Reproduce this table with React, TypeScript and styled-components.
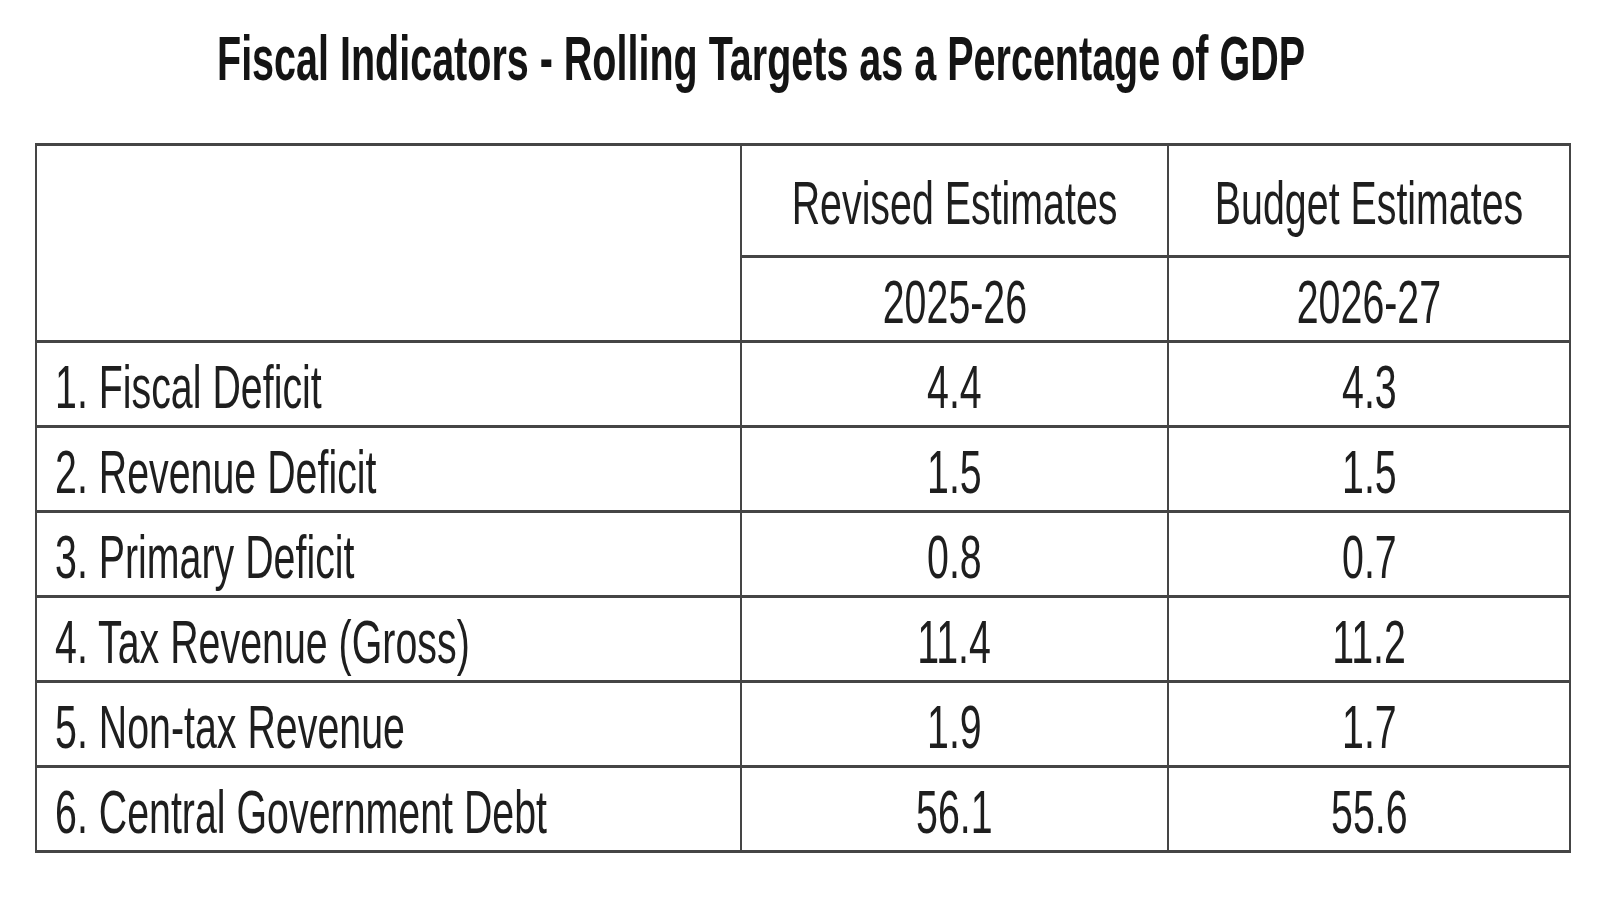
import React from 'react';
import styled, { createGlobalStyle } from 'styled-components';

const GlobalStyle = createGlobalStyle`
  html, body {
    margin: 0;
    padding: 0;
    background: #ffffff;
  }
  body {
    font-family: "Liberation Sans", Arial, sans-serif;
    color: #1c1c1c;
  }
`;

const SCPage = styled.div`
  width: 1600px;
  height: 900px;
  padding-top: 27px;
  box-sizing: border-box;
  overflow: hidden;
`;

const SCTitle = styled.h1`
  margin: 0 0 53px 0;
  padding-left: 217px;
  height: 63px;
  font-size: 63px;
  line-height: 63px;
  font-weight: 700;
  color: #141414;
  white-space: nowrap;
`;

const SCNarrow = styled.span<{ $scale: number; $origin?: string }>`
  display: inline-block;
  white-space: nowrap;
  transform: scaleX(${p => p.$scale});
  transform-origin: ${p => p.$origin || 'center'};
`;

const SCTable = styled.table`
  margin-left: 35px;
  width: 1534px;
  border-collapse: collapse;
  table-layout: fixed;
  font-size: 61px;
  line-height: 61px;
  color: #1e1e1e;
`;

const SCCell = styled.td<{ $height: number; $left?: boolean }>`
  height: ${p => p.$height}px;
  padding: 6px 0 0 ${p => (p.$left ? '18px' : '0')};
  vertical-align: middle;
  border-top: 3px solid #454545;
  border-bottom: 3px solid #454545;
  border-left: 2px solid #454545;
  border-right: 2px solid #454545;
  box-sizing: border-box;
  white-space: nowrap;
`;

const SCCellInner = styled.div<{ $left?: boolean }>`
  display: flex;
  justify-content: ${p => (p.$left ? 'flex-start' : 'center')};
  align-items: center;
`;

const rows = [
  { label: '1. Fiscal Deficit', re: '4.4', be: '4.3' },
  { label: '2. Revenue Deficit', re: '1.5', be: '1.5' },
  { label: '3. Primary Deficit', re: '0.8', be: '0.7' },
  { label: '4. Tax Revenue (Gross)', re: '11.4', be: '11.2' },
  { label: '5. Non-tax Revenue', re: '1.9', be: '1.7' },
  { label: '6. Central Government Debt', re: '56.1', be: '55.6' },
];

const SCALE = 0.645;

const Value = ({ text }: { text: string }) => (
  <SCCellInner>
    <SCNarrow $scale={SCALE}>{text}</SCNarrow>
  </SCCellInner>
);

const App = () => {
  return (
    <SCPage>
      <GlobalStyle />
      <SCTitle>
        <SCNarrow $scale={0.627} $origin="left">
          Fiscal Indicators - Rolling Targets as a Percentage of GDP
        </SCNarrow>
      </SCTitle>

      <SCTable>
        <colgroup>
          <col style={{ width: 705 }} />
          <col style={{ width: 427 }} />
          <col style={{ width: 402 }} />
        </colgroup>
        <tbody>
          <tr>
            <SCCell $height={197} rowSpan={2} $left />
            <SCCell $height={112}>
              <Value text="Revised Estimates" />
            </SCCell>
            <SCCell $height={112}>
              <Value text="Budget Estimates" />
            </SCCell>
          </tr>
          <tr>
            <SCCell $height={85}>
              <Value text="2025-26" />
            </SCCell>
            <SCCell $height={85}>
              <Value text="2026-27" />
            </SCCell>
          </tr>
          {rows.map(r => (
            <tr key={r.label}>
              <SCCell $height={85} $left>
                <SCCellInner $left>
                  <SCNarrow $scale={SCALE} $origin="left">{r.label}</SCNarrow>
                </SCCellInner>
              </SCCell>
              <SCCell $height={85}>
                <Value text={r.re} />
              </SCCell>
              <SCCell $height={85}>
                <Value text={r.be} />
              </SCCell>
            </tr>
          ))}
        </tbody>
      </SCTable>
    </SCPage>
  );
};

export default App;
